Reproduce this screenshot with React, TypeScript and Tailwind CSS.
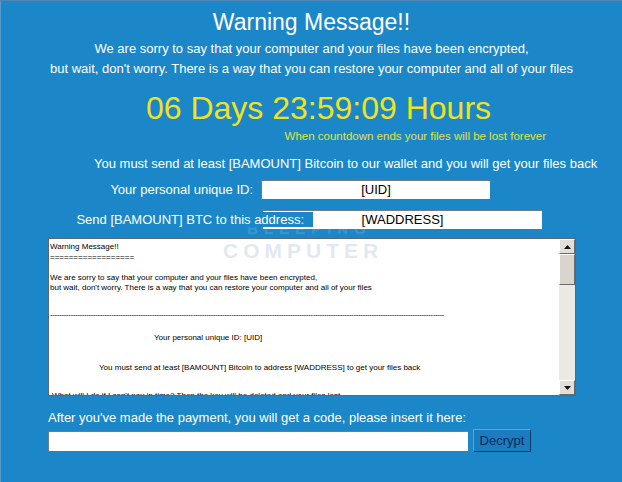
const fixedLines = {
  sorry: "We are sorry to say that your computer and your files have been encrypted,",
  wait: "but wait, don't worry. There is a way that you can restore your computer and all of your files",
};

function ScrollButton({ up }: { up?: boolean }) {
  return (
    <div className="flex h-[15px] w-[16px] items-center justify-center border border-t-white border-l-white border-r-[#6b6b6b] border-b-[#6b6b6b] bg-[#e2dfd8]">
      <svg width="7" height="4" viewBox="0 0 7 4">
        {up ? <path d="M0 4 L3.5 0 L7 4 Z" fill="#111" /> : <path d="M0 0 L3.5 4 L7 0 Z" fill="#111" />}
      </svg>
    </div>
  );
}

function NoteBox() {
  return (
    <div className="mx-[47px] mt-[9px] flex h-[158px] w-[528px] border border-[#5b6773] bg-white">
      <div className="min-w-0 flex-1 overflow-hidden pl-[1px] font-['Liberation_Sans',Arial,sans-serif] text-[8px] leading-[10px] text-black">
        <div className="mt-[3px] h-[10px]">Warning Message!!</div>
        <div className="mt-[1px] h-[10px]">==================</div>
        <div className="mt-[10px] h-[10px] whitespace-nowrap">{fixedLines.sorry}</div>
        <div className="h-[10px] whitespace-nowrap">{fixedLines.wait}</div>
        <div className="mt-[17px] h-[10px] whitespace-nowrap tracking-[-0.4px]">{"-".repeat(174)}</div>
        <div className="mt-[13px] h-[10px] pl-[104px] whitespace-nowrap">Your personal unique ID: [UID]</div>
        <div className="mt-[20px] h-[10px] pl-[49px] whitespace-nowrap">
          You must send at least [BAMOUNT] Bitcoin to address [WADDRESS] to get your files back
        </div>
        <div className="mt-[18px] h-[10px] pl-[2px] whitespace-nowrap">
          What will I do if I can't pay in time? Then the key will be deleted and your files lost.
        </div>
      </div>
      <div className="flex w-[16px] flex-col bg-[#ebe9e4]">
        <ScrollButton up />
        <div className="h-[31px] w-[16px] border border-t-white border-l-white border-r-[#6b6b6b] border-b-[#6b6b6b] bg-[#d9d5cd]" />
        <div className="flex-1" />
        <ScrollButton />
      </div>
    </div>
  );
}

export default function App() {
  return (
    <div className="relative h-[482px] w-[622px] overflow-hidden border-t border-l border-t-[#4f86b6] border-l-[#5a98cc] bg-[#1b87c8] font-['Liberation_Sans',Arial,sans-serif] text-white">
      <div className="mt-[7px] text-center text-[23px] leading-[28px]">Warning Message!!</div>
      <div className="mt-[3px] text-center text-[13px] leading-[20px]">{fixedLines.sorry}</div>
      <div className="text-center text-[13px] leading-[20px]">{fixedLines.wait}</div>

      <div className="mt-[9px] pl-[14px] text-center text-[32px] leading-[40px] text-[#f1e21c]">
        06 Days 23:59:09 Hours
      </div>
      <div className="mt-[1px] flex justify-end pr-[76px] text-[11.5px] leading-[14px] text-[#e2e23c]">
        When countdown ends your files will be lost forever
      </div>

      <div className="mt-[11px] pl-[93px] text-[13px] leading-[20px] whitespace-nowrap">
        You must send at least [BAMOUNT] Bitcoin to our wallet and you will get your files back
      </div>

      <div className="mt-[6px] flex h-[19px] items-center">
        <div className="w-[252px] text-right text-[13px] leading-[19px]">Your personal unique ID:</div>
        <div className="ml-[8px] flex h-[19px] w-[229px] items-center justify-center border-t border-l border-t-[#6f7d8a] border-l-[#6f7d8a] bg-white text-[13px] text-black">
          [UID]
        </div>
      </div>

      <div className="mt-[11px] flex h-[19px] items-start">
        <div className="relative z-10 mt-[2px] h-[15px] w-[312px] bg-[#1b87c8] pr-[9px] text-right text-[13px] leading-[15px] whitespace-nowrap">
          Send [BAMOUNT] BTC to this address:
        </div>
        <div className="-ml-[51px] flex h-[19px] w-[280px] items-center justify-center border-t border-l border-t-[#6f7d8a] border-l-[#6f7d8a] bg-white text-[13px] text-black">
          [WADDRESS]
        </div>
      </div>

      <NoteBox />

      <div className="mt-[13px] pl-[47px] text-[13px] leading-[18px]">
        After you've made the payment, you will get a code, please insert it here:
      </div>
      <div className="mt-[2px] flex h-[23px] items-center pl-[47px]">
        <div className="h-[20px] w-[420px] border-t border-l border-t-[#6f7d8a] border-l-[#6f7d8a] bg-white" />
        <button
          type="button"
          className="ml-[5px] h-[23px] w-[58px] border border-[#0d3a63] border-t-[#5fa2d6] border-l-[#5fa2d6] bg-[#1b7cbf] text-[13px] text-[#0c2b57]"
        >
          Decrypt
        </button>
      </div>

      {/* faint site watermark */}
      <div className="pointer-events-none absolute left-[246px] top-[220px] text-[15px] font-bold leading-[16px] tracking-[6px] text-white opacity-[0.12]">
        BLEEPING
      </div>
      <div className="pointer-events-none absolute left-[222px] top-[239px] text-[21px] font-bold leading-[22px] tracking-[5px] text-[#8ea6c8] opacity-[0.25]">
        COMPUTER
      </div>
    </div>
  );
}
